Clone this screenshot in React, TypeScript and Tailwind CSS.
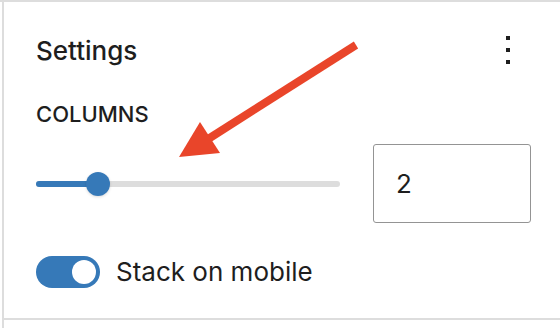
import React from "react";

function Kebab() {
    return (
        <button className="w-12 h-8 flex flex-col items-center justify-center gap-2 -mt-[2px]">
            <span className="block w-[4px] h-[4px] bg-[#1e1e1e]" />
            <span className="block w-[4px] h-[4px] bg-[#1e1e1e]" />
            <span className="block w-[4px] h-[4px] bg-[#1e1e1e]" />
        </button>
    );
}

function Slider() {
    return (
        <div className="relative w-[304px] h-6 flex items-center">
            <div className="w-full h-[6px] rounded-full bg-[#dddddd]" />
            <div className="absolute left-0 top-[9px] w-[62px] h-[6px] rounded-full bg-[#3679b8]" />
            <div className="absolute left-[50px] top-0 w-6 h-6 rounded-full bg-[#3679b8] shadow-[0_1px_3px_rgba(0,0,0,0.15)]" />
        </div>
    );
}

function Toggle() {
    return (
        <div className="w-16 h-8 rounded-full bg-[#3679b8] flex items-center justify-end pr-1">
            <div className="w-6 h-6 rounded-full bg-white" />
        </div>
    );
}

export default function App() {
    return (
        <div className="relative w-[560px] h-[328px] bg-white overflow-hidden text-[#1e1e1e] font-['Inter',sans-serif]">
            <div className="border-t-2 border-[#dddddd]">
                <div className="ml-[2px] border-l-2 border-[#dddddd] h-[326px]">
                    <div className="border-b-2 border-[#dddddd] pl-8 pt-[33px] pb-[30px]">

                        {/* Header */}
                        <div className="w-[496px] h-8 flex items-center justify-between">
                            <h2 className="text-[26px] leading-8 font-medium">Settings</h2>
                            <Kebab />
                        </div>

                        {/* Columns */}
                        <p className="mt-[35px] text-[22px] leading-6 font-medium uppercase">Columns</p>
                        <div className="mt-[18px] flex items-center">
                            <Slider />
                            <input
                                readOnly
                                value="2"
                                className="ml-[33px] w-[158px] h-[79px] border-[1.5px] border-[#949494] rounded-[3px] pl-[22px] text-[26px] outline-none"
                            />
                        </div>

                        {/* Stack toggle */}
                        <div className="mt-[33px] h-8 flex items-center gap-4">
                            <Toggle />
                            <span className="text-[26px] leading-8">Stack on mobile</span>
                        </div>

                    </div>
                </div>
            </div>

            {/* Annotation arrow */}
            <svg className="absolute left-0 top-0 pointer-events-none" width="560" height="328" viewBox="0 0 560 328">
                <line x1="356" y1="45" x2="205" y2="141" stroke="#e9452a" strokeWidth="8" />
                <polygon points="179,157 200,122 220,153" fill="#e9452a" />
            </svg>
        </div>
    );
}
